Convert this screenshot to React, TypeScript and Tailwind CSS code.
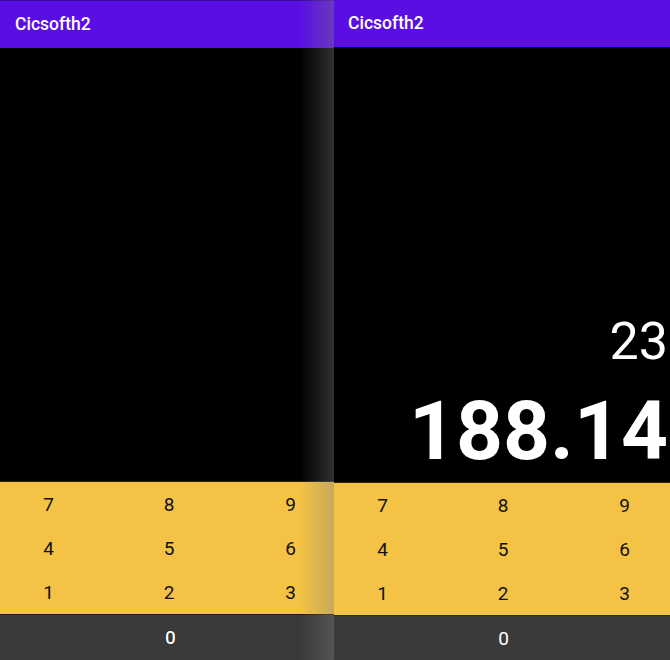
import React from "react";

const rows = [
  ["7", "8", "9"],
  ["4", "5", "6"],
  ["1", "2", "3"],
];

function Keypad() {
  return (
    <div className="flex flex-col h-[133px] bg-[#f4c244] border-t border-[#2a2410]">
      {rows.map((r, i) => (
        <div key={i} className="grid grid-cols-[97px_144px_99px] flex-1 items-center">
          {r.map((d) => (
            <div key={d} className="text-center text-[19px] leading-none text-[#111]">
              {d}
            </div>
          ))}
        </div>
      ))}
    </div>
  );
}

export default function App() {
  return (
    <div className="flex w-[670px] h-[660px] bg-black font-['Roboto',sans-serif] overflow-hidden">
      {/* Left pane */}
      <div className="relative flex flex-col w-[334px] h-full">
        <div className="flex items-center h-[48px] px-[15px] bg-[#5a0ee3] border-t border-[#3d0aa0]">
          <span className="text-white text-[17.5px] font-medium">Cicsofth2</span>
        </div>
        <div className="flex-1 bg-black" />
        <Keypad />
        <div className="flex items-center h-[46px] bg-[#3a3a3a] border-t border-[#1e1e1e]">
          <div className="w-[341px] shrink-0 text-center text-white text-[19px] font-medium leading-none [text-shadow:0_0_1px_#000,0_0_1px_#000]">
            0
          </div>
        </div>
        <div className="absolute top-0 right-0 bottom-0 w-[34px] bg-gradient-to-r from-[rgba(128,128,128,0)] to-[rgba(128,128,128,0.38)] pointer-events-none" />
      </div>

      {/* Right pane */}
      <div className="flex flex-col w-[336px] h-full">
        <div className="flex items-center h-[47px] px-[14px] bg-[#5a0ee3]">
          <span className="text-white text-[17.5px] font-medium">Cicsofth2</span>
        </div>
        <div className="flex-1 flex flex-col items-end justify-end bg-black pr-[2px] pb-[10px] overflow-hidden">
          <div className="text-white text-[52px] leading-none font-normal mb-[22px]">23</div>
          <div className="text-white text-[82px] leading-none font-bold whitespace-nowrap">188.14</div>
        </div>
        <Keypad />
        <div className="flex items-center h-[45px] bg-[#3a3a3a] border-t border-[#2a2a2a]">
          <div className="w-[339px] shrink-0 text-center text-white text-[19px] leading-none">0</div>
        </div>
      </div>
    </div>
  );
}
